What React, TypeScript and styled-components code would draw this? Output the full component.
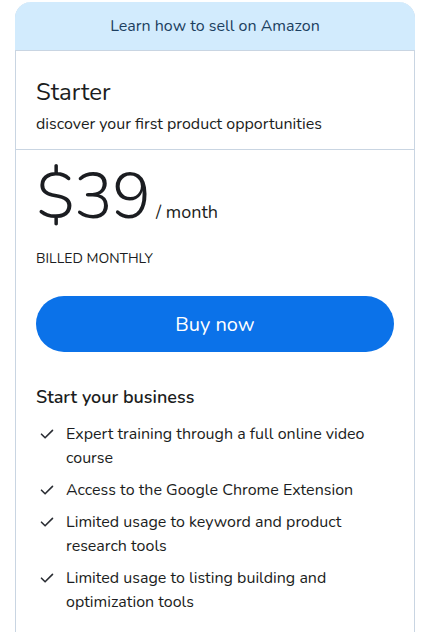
import styled, { createGlobalStyle } from 'styled-components'

const GlobalStyle = createGlobalStyle`
  html, body {
    margin: 0;
    padding: 0;
    background: #ffffff;
  }
  body {
    font-family: 'Nunito', 'Lato', 'Noto Sans', sans-serif;
    color: #1b1d21;
  }
`

const features = [
  'Expert training through a full online video course',
  'Access to the Google Chrome Extension',
  'Limited usage to keyword and product research tools',
  'Limited usage to listing building and optimization tools',
]

const Check = () => (
  <svg width="14" height="14" viewBox="0 0 14 14" fill="none">
    <path d="M1.5 7.2l3.6 3.6L12.5 3.4" stroke="#2a2d33" strokeWidth="1.6" strokeLinecap="round" strokeLinejoin="round" />
  </svg>
)

const App = () => {
  return (
    <>
      <GlobalStyle />
      <Page>
        <Card>
          <Banner>Learn how to sell on Amazon</Banner>
          <Head>
            <Title>Starter</Title>
            <Subtitle>discover your first product opportunities</Subtitle>
          </Head>
          <Body>
            <PriceRow>
              <Price>$39</Price>
              <Period>/ month</Period>
            </PriceRow>
            <Billed>BILLED MONTHLY</Billed>
            <BuyButton>Buy now</BuyButton>
            <Section>Start your business</Section>
            <List>
              {features.map((f) => (
                <Item key={f}>
                  <CheckBox>
                    <Check />
                  </CheckBox>
                  <span>{f}</span>
                </Item>
              ))}
            </List>
          </Body>
        </Card>
      </Page>
    </>
  )
}

const Page = styled.div`
  padding: 2px 14px 0 15px;
  height: 632px;
  box-sizing: border-box;
  overflow: hidden;
`

const Card = styled.div`
  border: 1px solid #c9d5e2;
  border-top: none;
  border-radius: 16px 16px 0 0;
  min-height: 700px;
  background: #fff;
`

const Banner = styled.div`
  height: 48px;
  background: #d2ebfd;
  border-radius: 16px 16px 0 0;
  border-bottom: 1px solid #c9d5e2;
  margin: 0 -1px;
  display: flex;
  align-items: center;
  justify-content: center;
  font-size: 16px;
  color: #1c3f60;
`

const Head = styled.div`
  padding: 26px 20px 0;
  height: 99px;
  box-sizing: border-box;
  border-bottom: 1px solid #c9d5e2;
`

const Title = styled.div`
  font-size: 24px;
  line-height: 30px;
`

const Subtitle = styled.div`
  margin-top: 7px;
  font-size: 16px;
  line-height: 20px;
`

const Body = styled.div`
  padding: 5px 20px 0;
`

const PriceRow = styled.div`
  display: flex;
  align-items: baseline;
  gap: 6px;
`

const Price = styled.div`
  font-size: 65px;
  line-height: 84px;
  font-weight: 300;
  letter-spacing: -1px;
`

const Period = styled.div`
  font-size: 18px;
`

const Billed = styled.div`
  margin-top: 11px;
  font-size: 14px;
  line-height: 18px;
`

const BuyButton = styled.button`
  display: block;
  width: 100%;
  height: 56px;
  margin-top: 28px;
  border: none;
  border-radius: 28px;
  background: #0b72e9;
  color: #fff;
  font-family: inherit;
  font-size: 20px;
  cursor: pointer;
`

const Section = styled.div`
  margin-top: 34px;
  font-size: 18px;
  font-weight: 600;
  line-height: 22px;
`

const List = styled.ul`
  list-style: none;
  margin: 14px 0 0;
  padding: 0 0 0 4px;
  display: flex;
  flex-direction: column;
  gap: 8px;
`

const Item = styled.li`
  display: flex;
  gap: 12px;
  font-size: 16px;
  line-height: 24px;
  padding-right: 20px;
`

const CheckBox = styled.span`
  flex: none;
  width: 14px;
  height: 24px;
  display: flex;
  align-items: center;
`

export default App
